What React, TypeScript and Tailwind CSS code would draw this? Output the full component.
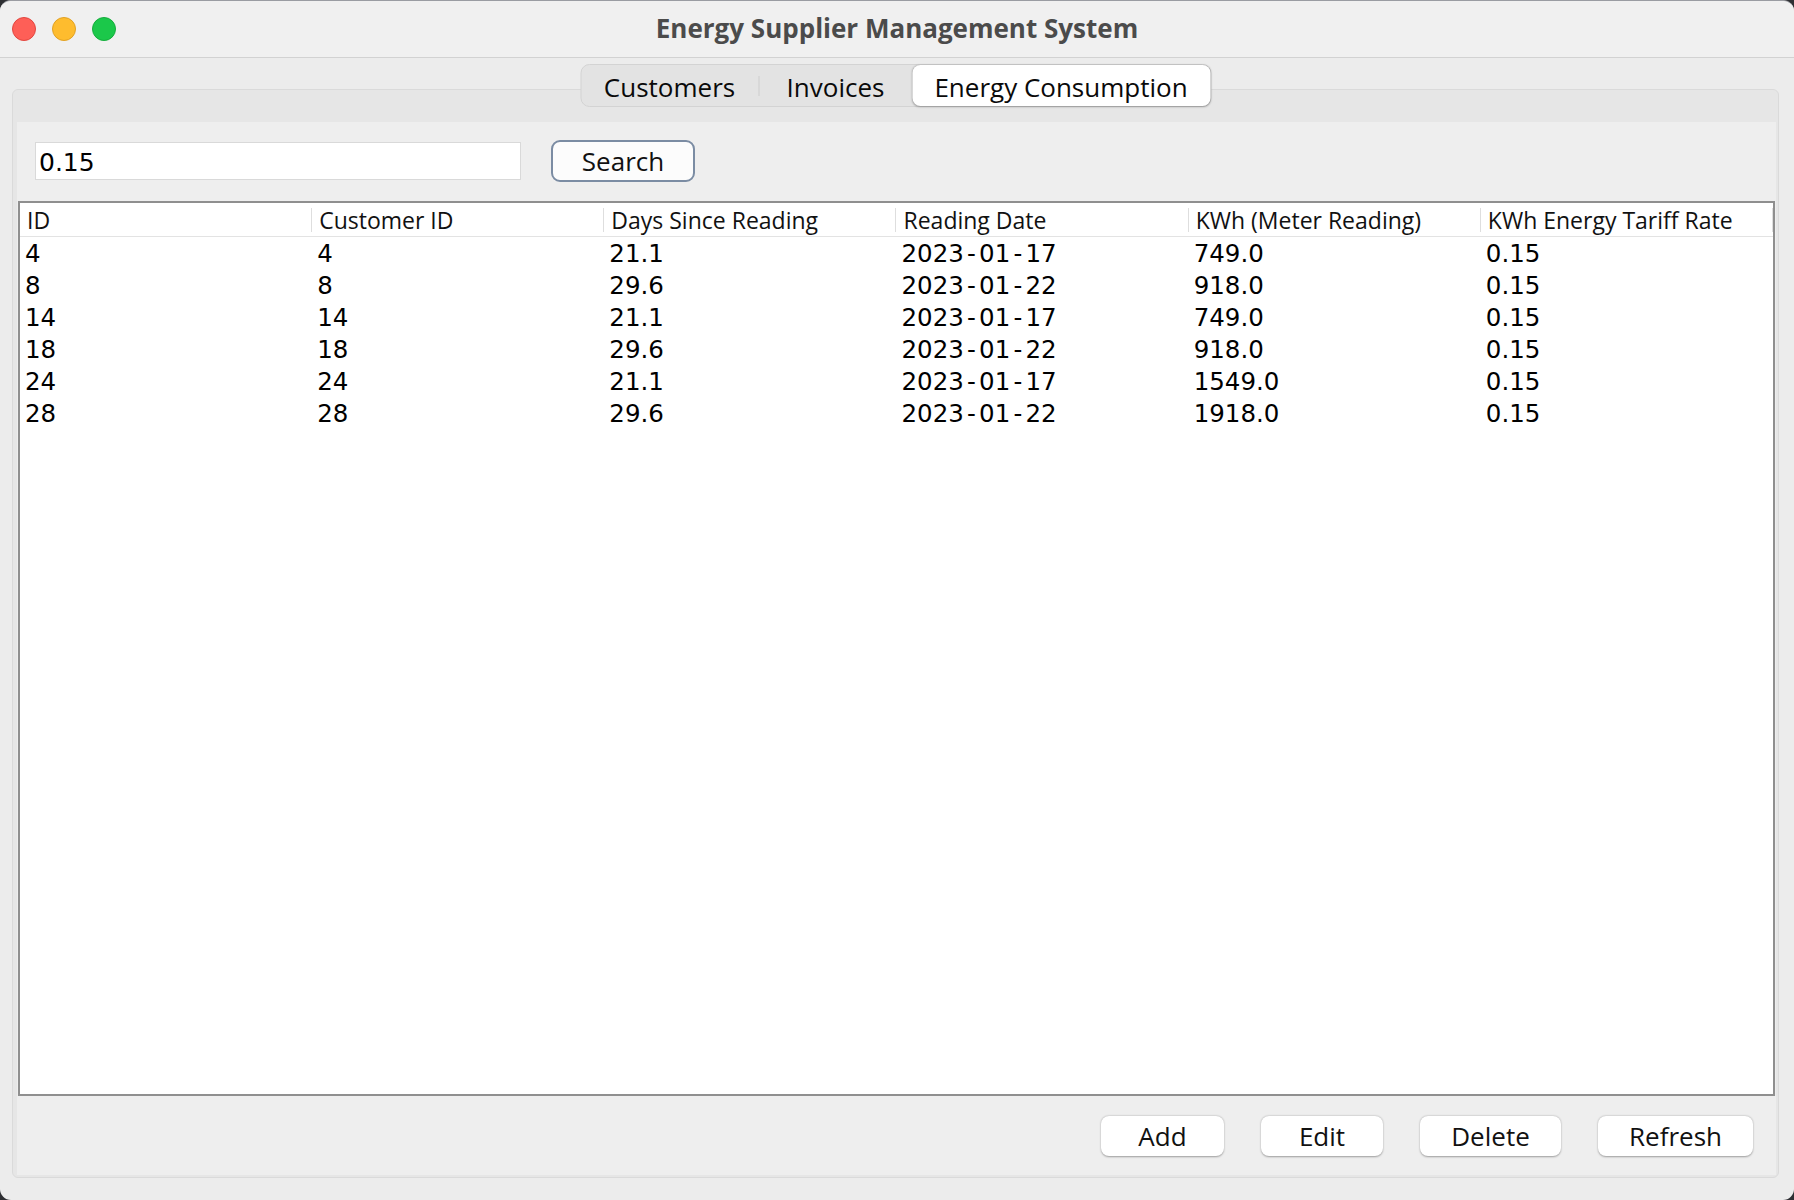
import React from "react";

const rows = [
  ["4", "4", "21.1", "2023-01-17", "749.0", "0.15"],
  ["8", "8", "29.6", "2023-01-22", "918.0", "0.15"],
  ["14", "14", "21.1", "2023-01-17", "749.0", "0.15"],
  ["18", "18", "29.6", "2023-01-22", "918.0", "0.15"],
  ["24", "24", "21.1", "2023-01-17", "1549.0", "0.15"],
  ["28", "28", "29.6", "2023-01-22", "1918.0", "0.15"],
];

const headers = [
  "ID",
  "Customer ID",
  "Days Since Reading",
  "Reading Date",
  "KWh (Meter Reading)",
  "KWh Energy Tariff Rate",
];

function Cell({ text }: { text: string }) {
  const parts = text.split("-");
  if (parts.length === 1) return <>{text}</>;
  return (
    <>
      {parts.map((p, i) => (
        <React.Fragment key={i}>
          {i > 0 && <span className="pl-[0.13em] tracking-[0.13em]">-</span>}
          {p}
        </React.Fragment>
      ))}
    </>
  );
}

function FooterButton({ label, w }: { label: string; w: string }) {
  return (
    <button
      className={`${w} h-[40px] rounded-[8px] bg-white text-[26px] leading-none text-[#111] shadow-[0_0.5px_2px_rgba(0,0,0,0.35)] flex items-center justify-center`}
    >
      {label}
    </button>
  );
}

export default function App() {
  return (
    <div className="w-[1794px] h-[1200px] bg-[#2e2f33] font-['Open_Sans',sans-serif]">
      <div className="w-full h-full rounded-[11px] overflow-hidden bg-[#ececec] flex flex-col border-t border-[#9a9ca2]">
        {/* Title bar */}
        <div className="h-[57px] shrink-0 bg-[#f0f0f0] border-b border-[#d2d2d2] grid grid-cols-[1fr_auto_1fr] items-center">
          <div className="flex items-center gap-[16px] pl-[12px]">
            <span className="w-[24px] h-[24px] rounded-full bg-[#fe5f57] border border-[#e2463f]" />
            <span className="w-[24px] h-[24px] rounded-full bg-[#febc2e] border border-[#e1a123]" />
            <span className="w-[24px] h-[24px] rounded-full bg-[#1bc84a] border border-[#15ad3c]" />
          </div>
          <div className="text-[26px] font-bold text-[#4b4b4b] leading-none pb-[2px]">
            Energy Supplier Management System
          </div>
          <div />
        </div>

        {/* Content */}
        <div className="flex-1 flex flex-col pl-[12px] pr-[15px] pt-[31px] pb-[22px]">
          <div className="relative flex-1 flex flex-col rounded-[6px] border border-[#dadada] bg-[#e6e6e6] pt-[32px] pl-[4px] pr-[2px] pb-[2px]">
            {/* Segmented tabs */}
            <div className="absolute top-[-26px] left-1/2 -translate-x-1/2 h-[43px] rounded-[9px] border border-[#d3d3d3] bg-[#e3e3e3] flex items-center z-10">
              <div className="w-[177px] h-full flex items-center justify-center pt-[2px] text-[26px] text-[#0a0a0a] leading-none">
                Customers
              </div>
              <div className="w-[1px] h-[20px] bg-[#cdcdcd]" />
              <div className="w-[153px] h-full flex items-center justify-center pt-[2px] text-[26px] text-[#0a0a0a] leading-none">
                Invoices
              </div>
              <div className="w-[298px] h-[41px] rounded-[8px] bg-white shadow-[0_0.5px_2px_rgba(0,0,0,0.3)] flex items-center justify-center pt-[2px] text-[26px] text-[#0a0a0a] leading-none">
                Energy Consumption
              </div>
            </div>

            {/* Inner */}
            <div className="flex-1 flex flex-col bg-[#eeeeee]">
              {/* Search row */}
              <div className="pt-[18px] pl-[18px] flex items-center gap-[30px]">
                <div className="w-[486px] h-[38px] bg-white border border-[#d9d9d9] flex items-center pl-[3px] pt-[3px] font-['DejaVu_Sans',sans-serif] text-[25px] text-black">
                  0.15
                </div>
                <button className="w-[144px] h-[42px] rounded-[9px] border-2 border-[#7b8ca3] bg-[#fcfcfc] text-[26px] leading-none text-[#111] flex items-center justify-center">
                  Search
                </button>
              </div>

              {/* Table */}
              <div className="mt-[19px] mx-[1px] flex-1 border-2 border-[#8f8f8f] bg-white flex flex-col">
                <div className="h-[34px] grid grid-cols-6 border-b border-[#e3e3e3]">
                  {headers.map((h) => (
                    <div key={h} className="flex items-center pt-[1px]">
                      <div className="w-full h-[24px] border-r border-[#dedede] pl-[7px] flex items-center text-[23px] text-[#111] leading-none whitespace-nowrap">
                        {h}
                      </div>
                    </div>
                  ))}
                </div>
                {rows.map((r, i) => (
                  <div key={i} className="h-[32px] grid grid-cols-6 font-['DejaVu_Sans',sans-serif] text-[24.5px] text-black">
                    {r.map((c, j) => (
                      <div key={j} className="pl-[5px] pt-[2px] flex items-center leading-none whitespace-nowrap">
                        <Cell text={c} />
                      </div>
                    ))}
                  </div>
                ))}
              </div>

              {/* Footer buttons */}
              <div className="pt-[20px] pb-[19px] pr-[23px] flex justify-end gap-[37px]">
                <FooterButton label="Add" w="w-[123px]" />
                <FooterButton label="Edit" w="w-[122px]" />
                <FooterButton label="Delete" w="w-[141px]" />
                <FooterButton label="Refresh" w="w-[155px]" />
              </div>
            </div>
          </div>
        </div>
      </div>
    </div>
  );
}
